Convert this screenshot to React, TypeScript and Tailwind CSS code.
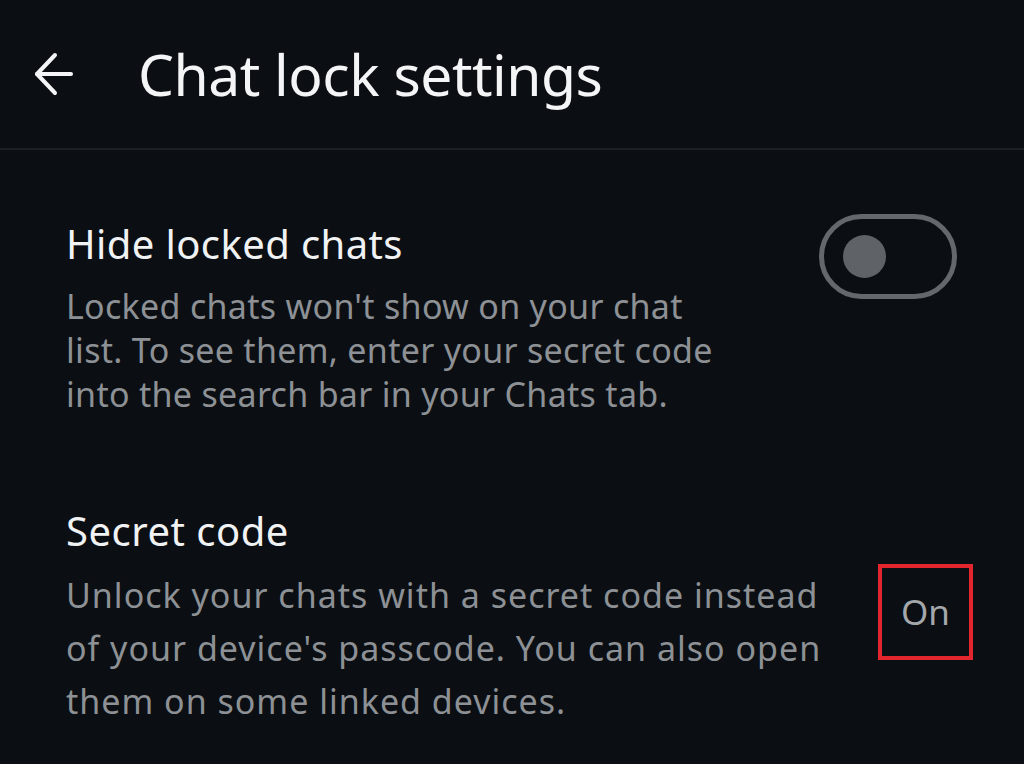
// ── Back arrow ────────────────────────────────────────────────────────────────

const BackArrow = () => (
  <svg width="40" height="48" viewBox="0 0 40 48" fill="none" stroke="#f4f5f6" strokeWidth="4" strokeLinecap="round" strokeLinejoin="round">
    <path d="M3 24H37" />
    <path d="M21 5L3 24L21 43" />
  </svg>
);

// ── Toggle (off) ──────────────────────────────────────────────────────────────

const Toggle = () => (
  <div className="w-[138px] h-[85px] rounded-full border-[5px] border-[#64686d] flex items-center pl-[19px] flex-shrink-0">
    <div className="w-[43px] h-[43px] rounded-full bg-[#5f6368]" />
  </div>
);

const font = { fontFamily: '"Noto Sans", "Open Sans", sans-serif' };

export default function App() {
  return (
    <div className="w-[1024px] h-[764px] bg-[#0b0f13] overflow-hidden" style={font}>
      {/* ── Header ── */}
      <header className="h-[150px] flex items-center pl-[34px] border-b-2 border-[#1c2024]">
        <BackArrow />
        <h1 className="ml-[64px] text-[57px] leading-none text-[#f4f5f6] tracking-[-0.5px]">
          Chat lock settings
        </h1>
      </header>

      {/* ── Hide locked chats ── */}
      <section className="flex items-start justify-between pl-[66px] pr-[67px] pt-[70px]">
        <div>
          <h2 className="text-[40px] leading-[48px] text-[#f1f2f3] tracking-[0.4px]">Hide locked chats</h2>
          <p className="mt-[16px] text-[34px] leading-[44px] text-[#8d9195] tracking-[0.3px]">
            <span className="block whitespace-nowrap">Locked chats won't show on your chat</span>
            <span className="block whitespace-nowrap">list. To see them, enter your secret code</span>
            <span className="block whitespace-nowrap">into the search bar in your Chats tab.</span>
          </p>
        </div>
        <div className="-mt-[6px]">
          <Toggle />
        </div>
      </section>

      {/* ── Secret code ── */}
      <section className="flex items-center justify-between pl-[66px] pr-[51px] pt-[91px]">
        <div>
          <h2 className="text-[40px] leading-[48px] text-[#f1f2f3] tracking-[0.5px]">Secret code</h2>
          <p className="mt-[14px] text-[34px] leading-[53px] text-[#8d9195] tracking-[1px]">
            <span className="block whitespace-nowrap">Unlock your chats with a secret code instead</span>
            <span className="block whitespace-nowrap">of your device's passcode. You can also open</span>
            <span className="block whitespace-nowrap">them on some linked devices.</span>
          </p>
        </div>
        <div className="w-[95px] h-[96px] border-4 border-[#e3262d] flex items-center justify-center -mt-[12px] flex-shrink-0">
          <span className="text-[35px] leading-none text-[#a4a7ab]">On</span>
        </div>
      </section>
    </div>
  );
}
